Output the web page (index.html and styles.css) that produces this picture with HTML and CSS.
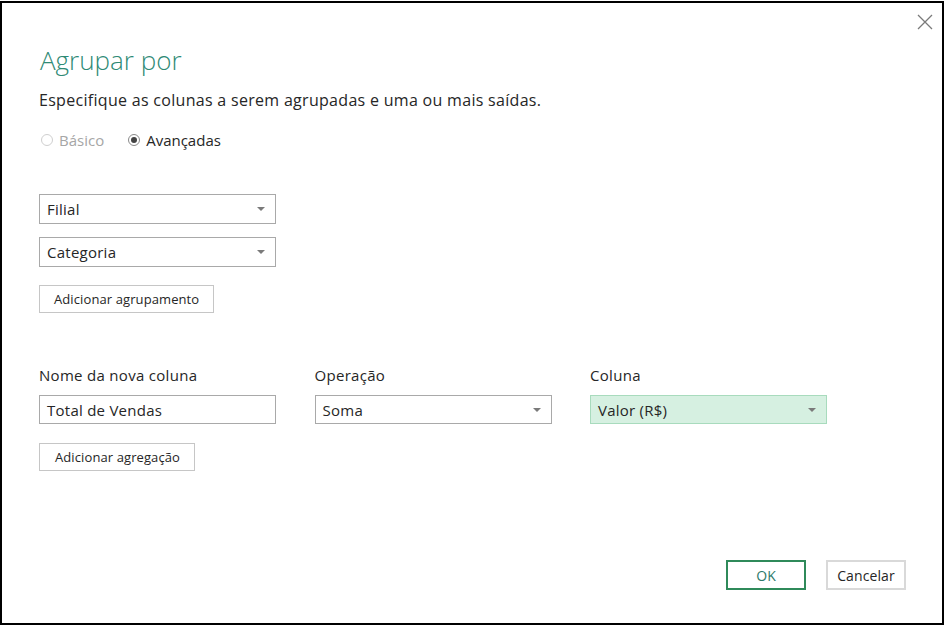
FILE: index.html
```html
<!DOCTYPE html>
<html lang="pt-BR">
<head>
<meta charset="utf-8">
<title>Agrupar por</title>
<link rel="stylesheet" href="styles.css">
</head>
<body>
<div class="dialog">
  <button class="close" aria-label="Fechar">
    <svg width="16" height="16" viewBox="0 0 16 16"><path d="M1 1 L15 15 M15 1 L1 15" stroke="#7a7a7a" stroke-width="1.3" fill="none"/></svg>
  </button>
  <h1 class="title">Agrupar por</h1>
  <p class="subtitle">Especifique as colunas a serem agrupadas e uma ou mais saídas.</p>

  <div class="mode">
    <label class="radio disabled"><span class="dot"></span>Básico</label>
    <label class="radio checked"><span class="dot"></span>Avançadas</label>
  </div>

  <div class="groups">
    <div class="select"><span>Filial</span><i class="caret"></i></div>
    <div class="select"><span>Categoria</span><i class="caret"></i></div>
    <button class="btn add-group">Adicionar agrupamento</button>
  </div>

  <div class="aggs">
    <div class="agg-grid">
      <div class="label">Nome da nova coluna</div>
      <div class="label">Operação</div>
      <div class="label">Coluna</div>
      <div class="input">Total de Vendas</div>
      <div class="select"><span>Soma</span><i class="caret"></i></div>
      <div class="select active"><span>Valor (R$)</span><i class="caret"></i></div>
    </div>
    <button class="btn add-agg">Adicionar agregação</button>
  </div>

  <div class="footer">
    <button class="btn primary">OK</button>
    <button class="btn cancel">Cancelar</button>
  </div>
</div>
</body>
</html>
```
FILE: styles.css
```css
* { box-sizing: border-box; }

html, body {
  margin: 0;
  background: #fff;
}

body {
  font-family: "Open Sans", "Noto Sans", sans-serif;
  color: #262626;
  padding: 1px 0 0 0;
}

.dialog {
  position: relative;
  width: 944px;
  height: 624px;
  border: 2px solid #000;
  background: #fff;
  padding: 0 0 0 37px;
  display: flex;
  flex-direction: column;
}

.close {
  position: absolute;
  top: 11px;
  right: 9px;
  padding: 0;
  border: 0;
  background: none;
  width: 16px;
  height: 16px;
}

.title {
  margin: 40px 0 0 1px;
  font-weight: 300;
  font-size: 26px;
  line-height: 34px;
  color: #2e8a75;
}

.subtitle {
  margin: 13px 0 0 0;
  font-size: 16px;
  letter-spacing: 0.3px;
  line-height: 20px;
  color: #262626;
}

.mode {
  display: flex;
  gap: 22px;
  margin-top: 20px;
  height: 20px;
  align-items: center;
}

.radio {
  display: flex;
  align-items: center;
  gap: 6px;
  font-size: 15px;
  color: #262626;
  margin-left: 2px;
}

.radio .dot {
  width: 12px;
  height: 12px;
  border-radius: 50%;
  border: 1px solid #8a8a8a;
  display: inline-flex;
  align-items: center;
  justify-content: center;
}

.radio.disabled { color: #a6a6a6; }
.radio.disabled .dot { border-color: #cfcfcf; }

.radio.checked .dot::after {
  content: "";
  width: 6px;
  height: 6px;
  border-radius: 50%;
  background: #444;
}

.groups {
  margin-top: 44px;
  display: flex;
  flex-direction: column;
  gap: 13px;
  align-items: flex-start;
}

.select, .input {
  width: 237px;
  height: 30px;
  border: 1px solid #a9a9a9;
  background: #fff;
  display: flex;
  align-items: center;
  justify-content: space-between;
  padding: 0 10px 0 7px;
  font-size: 15px;
  letter-spacing: 0.25px;
  color: #262626;
}

.caret {
  width: 0;
  height: 0;
  border-left: 4px solid transparent;
  border-right: 4px solid transparent;
  border-top: 4px solid #7a7a7a;
}

.btn {
  font-family: inherit;
  font-size: 13px;
  letter-spacing: 0.1px;
  color: #262626;
  background: #fff;
  border: 1px solid #c6c6c6;
  height: 28px;
  padding: 0 14px;
  cursor: default;
}

.add-group { margin-top: 5px; }

.aggs {
  margin-top: 52px;
}

.agg-grid {
  display: grid;
  grid-template-columns: 237px 237px 237px;
  column-gap: 38.5px;
  row-gap: 10px;
}

.agg-grid .select, .agg-grid .input {
  height: 29px;
}

.label {
  font-size: 15px;
  letter-spacing: 0.3px;
  line-height: 20px;
  color: #262626;
}

.agg-grid .select.active {
  background: #d6f0e1;
  border-color: #a8dbbd;
}

.add-agg {
  margin-top: 19px;
  padding: 0 14px 0 15px;
}

.footer {
  display: flex;
  justify-content: flex-end;
  gap: 20px;
  margin-top: auto;
  margin-bottom: 33px;
  padding-right: 36px;
}

.footer .btn {
  width: 80px;
  height: 30px;
  font-size: 14px;
  padding: 0;
}

.btn.primary {
  border: 2px solid #2f8a5a;
  color: #2e7a6a;
}

.btn.cancel {
  border: 2px solid #d9d9d9;
}
```
